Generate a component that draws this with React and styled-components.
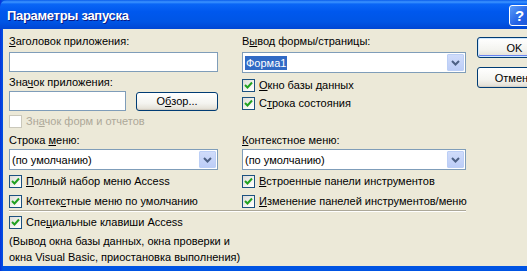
import React from 'react';
import styled, { createGlobalStyle } from 'styled-components';

const GlobalStyle = createGlobalStyle`
  html, body {
    margin: 0;
    padding: 0;
    overflow: hidden;
    background: #ece9d8;
  }
  body {
    font-family: "Liberation Sans", Arial, sans-serif;
    font-size: 11px;
    color: #000;
  }
`;

const Window = styled.div`
  width: 533px;
  height: 271px;
  display: flex;
  flex-direction: column;
  background: linear-gradient(to right, #0831d9, #0054e3 3px);
  overflow: hidden;
`;

const TitleBar = styled.div`
  height: 29px;
  flex-shrink: 0;
  display: flex;
  align-items: center;
  padding: 1px 3px 0 7px;
  box-sizing: border-box;
  border-top-left-radius: 7px;
  background: linear-gradient(
    to bottom,
    #0a5ceb 0%,
    #3d95ff 7%,
    #0a66f6 14%,
    #0058ee 40%,
    #0055e5 75%,
    #0046d3 100%
  );
`;

const Title = styled.div`
  flex: 1;
  color: #fff;
  font-weight: bold;
  font-size: 13px;
  letter-spacing: -0.3px;
  text-shadow: 1px 1px #0a1883;
`;

const HelpButton = styled.div`
  width: 21px;
  height: 21px;
  box-sizing: border-box;
  border: 1px solid #fff;
  border-radius: 3px;
  background: linear-gradient(135deg, #5a9cf8, #2463e6 60%, #1d56d8);
  color: #fff;
  font-weight: bold;
  font-size: 15px;
  display: flex;
  align-items: center;
  justify-content: center;
`;

const Body = styled.div`
  flex: 1;
  margin-bottom: 5px;
  margin-left: 3px;
  background: #ece9d8;
  display: flex;
  padding: 6px 0 0 6px;
  box-sizing: border-box;
`;

const Main = styled.div`
  width: 457px;
  flex-shrink: 0;
  display: flex;
  flex-direction: column;
`;

const TwoCols = styled.div`
  display: grid;
  grid-template-columns: 209px 224px;
  column-gap: 24px;
  align-items: start;
  margin-top: ${(p) => p.$top || 0}px;
`;

const Column = styled.div`
  display: flex;
  flex-direction: column;
`;

const Label = styled.div`
  height: 13px;
  line-height: 13px;
  white-space: nowrap;
  margin-top: ${(p) => p.$top || 0}px;
`;

const TextInput = styled.div`
  width: ${(p) => p.$width || 209}px;
  height: 20px;
  box-sizing: border-box;
  border: 1px solid #7f9db9;
  background: #fff;
  margin-top: ${(p) => p.$top || 0}px;
`;

const InputRow = styled.div`
  display: flex;
  align-items: center;
  gap: 10px;
  margin-top: ${(p) => p.$top || 0}px;
`;

const Combo = styled.div`
  height: 21px;
  box-sizing: border-box;
  border: 1px solid #7f9db9;
  background: #fff;
  display: flex;
  align-items: center;
  padding: 1px;
  margin-top: ${(p) => p.$top || 0}px;
`;

const ComboText = styled.div`
  flex: 1;
  display: flex;
  align-items: center;
  height: 17px;
  padding-left: 1px;
`;

const Selected = styled.span`
  background: #316ac5;
  color: #fff;
  line-height: 14px;
  padding: 0 1px;
`;

const ComboButton = styled.div`
  width: 17px;
  height: 17px;
  box-sizing: border-box;
  border: 1px solid #bccff6;
  border-radius: 1px;
  background: linear-gradient(to bottom, #d0dcfa, #bccdf7);
  display: flex;
  align-items: center;
  justify-content: center;
`;

const CheckRow = styled.div`
  display: flex;
  align-items: center;
  gap: 4px;
  height: 13px;
  line-height: 13px;
  white-space: nowrap;
  margin-top: ${(p) => p.$top || 0}px;
  color: ${(p) => (p.$disabled ? '#aca899' : '#000')};
`;

const Box = styled.span`
  width: 13px;
  height: 13px;
  box-sizing: border-box;
  flex-shrink: 0;
  border: 1px solid ${(p) => (p.$disabled ? '#cac8bb' : '#1c5180')};
  background: ${(p) =>
    p.$disabled ? '#fff' : 'linear-gradient(135deg, #dcdcd7, #fbfbf9 80%, #fff)'};
  display: flex;
  align-items: center;
  justify-content: center;
`;

const Separator = styled.div`
  height: 1px;
  background: #aca899;
  border-bottom: 1px solid #fff;
  margin-top: 2px;
`;

const Note = styled.div`
  margin-top: 4px;
  line-height: 16px;
`;

const ButtonColumn = styled.div`
  display: flex;
  flex-direction: column;
  gap: 9px;
  margin: 2px 0 0 11px;
`;

const XpButton = styled.div`
  width: ${(p) => p.$width || 75}px;
  height: ${(p) => p.$height || 21}px;
  flex-shrink: 0;
  box-sizing: border-box;
  border: 1px solid #003c74;
  border-radius: 3px;
  background: linear-gradient(to bottom, #fff, #f4f4f0 60%, #e6e3da 90%, #d6d0c5);
  box-shadow: ${(p) =>
    p.$default
      ? 'inset 0 0 0 1px #cee7ff, inset 0 -1px 0 1px #6982ee'
      : 'inset 0 -1px 0 0 #d6d0c5'};
  display: flex;
  align-items: center;
  justify-content: center;
  white-space: nowrap;
`;

const Check = () => (
  <svg width="9" height="9" viewBox="0 0 9 9">
    <polyline points="1,4 3.5,6.5 8,1.5" fill="none" stroke="#21a121" strokeWidth="2" />
  </svg>
);

const Arrow = () => (
  <svg width="9" height="6" viewBox="0 0 9 6">
    <polyline points="1,1 4.5,4.5 8,1" fill="none" stroke="#4d6185" strokeWidth="2" />
  </svg>
);

const CheckItem = ({ top, disabled, checked = true, children }) => (
  <CheckRow $top={top} $disabled={disabled}>
    <Box $disabled={disabled}>{checked && !disabled && <Check />}</Box>
    <span>{children}</span>
  </CheckRow>
);

const ComboBox = ({ top, children }) => (
  <Combo $top={top}>
    <ComboText>{children}</ComboText>
    <ComboButton>
      <Arrow />
    </ComboButton>
  </Combo>
);

export default function App() {
  return (
    <>
      <GlobalStyle />
      <Window>
        <TitleBar>
          <Title>Параметры запуска</Title>
          <HelpButton>?</HelpButton>
        </TitleBar>
        <Body>
          <Main>
            <TwoCols>
              <Column>
                <Label><u>З</u>аголовок приложения:</Label>
                <TextInput $top={4} />
                <Label $top={4}>Зна<u>ч</u>ок приложения:</Label>
                <InputRow $top={2}>
                  <TextInput $width={117} />
                  <XpButton $width={82} $height={19}>О<u>б</u>зор...</XpButton>
                </InputRow>
                <CheckItem top={4} disabled>
                  Зн<u>а</u>чок форм и отчетов
                </CheckItem>
              </Column>
              <Column>
                <Label>В<u>ы</u>вод формы/страницы:</Label>
                <ComboBox top={4}>
                  <Selected>Форма1</Selected>
                </ComboBox>
                <CheckItem top={6}><u>О</u>кно базы данных</CheckItem>
                <CheckItem top={5}>С<u>т</u>рока состояния</CheckItem>
              </Column>
            </TwoCols>

            <TwoCols $top={6}>
              <Column>
                <Label>Строка <u>м</u>еню:</Label>
                <ComboBox top={2}>(по умолчанию)</ComboBox>
                <CheckItem top={5}><u>П</u>олный набор меню Access</CheckItem>
                <CheckItem top={7}>Контек<u>с</u>тные меню по умолчанию</CheckItem>
              </Column>
              <Column>
                <Label><u>К</u>онтекстное меню:</Label>
                <ComboBox top={2}>(по умолчанию)</ComboBox>
                <CheckItem top={5}><u>В</u>строенные панели инструментов</CheckItem>
                <CheckItem top={7}><u>И</u>зменение панелей инструментов/меню</CheckItem>
              </Column>
            </TwoCols>

            <Separator />
            <CheckItem top={4}>Спе<u>ц</u>иальные клавиши Access</CheckItem>
            <Note>
              (Вывод окна базы данных, окна проверки и
              <br />
              окна Visual Basic, приостановка выполнения)
            </Note>
          </Main>
          <ButtonColumn>
            <XpButton $default>OK</XpButton>
            <XpButton>Отмена</XpButton>
          </ButtonColumn>
        </Body>
      </Window>
    </>
  );
}
